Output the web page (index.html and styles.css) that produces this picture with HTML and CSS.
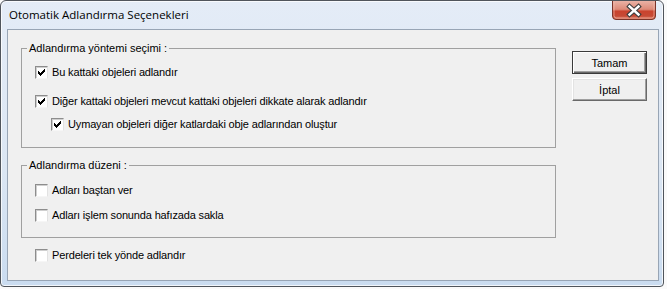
FILE: index.html
```html
<!DOCTYPE html>
<html lang="tr">
<head>
<meta charset="utf-8">
<title>Otomatik Adlandırma Seçenekleri</title>
<link rel="stylesheet" href="styles.css">
</head>
<body>
<div class="window">
  <div class="titlebar">
    <span class="title">Otomatik Adlandırma Seçenekleri</span>
    <span class="close">
      <svg width="44" height="19" viewBox="0 0 44 19">
        <defs>
          <linearGradient id="cg" x1="0" y1="0" x2="0" y2="1">
            <stop offset="0" stop-color="#eab2a5"/>
            <stop offset="0.45" stop-color="#dd8a78"/>
            <stop offset="0.55" stop-color="#c9432e"/>
            <stop offset="0.8" stop-color="#c64a35"/>
            <stop offset="1" stop-color="#dc7a63"/>
          </linearGradient>
        </defs>
        <path d="M0.5 0 V15 Q0.5 18.5 4 18.5 H40 Q43.5 18.5 43.5 15 V0" fill="url(#cg)" stroke="#7a3429" stroke-width="1"/>
        <path d="M2 1 V14.5 Q2 17 4.5 17 H39.5 Q42 17 42 14.5 V1" fill="none" stroke="#f3c3b6" stroke-opacity="0.6" stroke-width="1"/>
        <g stroke-linecap="square">
          <path d="M17.5 5.5 L26.5 13.5 M26.5 5.5 L17.5 13.5" stroke="#3d3d3d" stroke-width="4.6"/>
          <path d="M17.5 5.5 L26.5 13.5 M26.5 5.5 L17.5 13.5" stroke="#ffffff" stroke-width="2.4"/>
        </g>
      </svg>
    </span>
  </div>
  <div class="client">
    <div class="options">
      <fieldset class="group g1">
        <legend>Adlandırma yöntemi seçimi :</legend>
        <div class="row r1">
          <span class="cb"><svg class="tick" width="13" height="13" viewBox="0 0 13 13"><path d="M3 5h1v3h-1z M4 6h1v3h-1z M5 7h1v3h-1z M6 6h1v3h-1z M7 5h1v3h-1z M8 4h1v3h-1z M9 3h1v3h-1z" fill="#000"/></svg></span>
          <span class="label">Bu kattaki objeleri adlandır</span>
        </div>
        <div class="row r2">
          <span class="cb"><svg class="tick" width="13" height="13" viewBox="0 0 13 13"><path d="M3 5h1v3h-1z M4 6h1v3h-1z M5 7h1v3h-1z M6 6h1v3h-1z M7 5h1v3h-1z M8 4h1v3h-1z M9 3h1v3h-1z" fill="#000"/></svg></span>
          <span class="label">Diğer kattaki objeleri mevcut kattaki objeleri dikkate alarak adlandır</span>
        </div>
        <div class="row r3 indent">
          <span class="cb"><svg class="tick" width="13" height="13" viewBox="0 0 13 13"><path d="M3 5h1v3h-1z M4 6h1v3h-1z M5 7h1v3h-1z M6 6h1v3h-1z M7 5h1v3h-1z M8 4h1v3h-1z M9 3h1v3h-1z" fill="#000"/></svg></span>
          <span class="label">Uymayan objeleri diğer katlardaki obje adlarından oluştur</span>
        </div>
      </fieldset>
      <fieldset class="group g2">
        <legend>Adlandırma düzeni :</legend>
        <div class="row r4">
          <span class="cb"></span>
          <span class="label">Adları baştan ver</span>
        </div>
        <div class="row r5">
          <span class="cb"></span>
          <span class="label">Adları işlem sonunda hafızada sakla</span>
        </div>
      </fieldset>
      <div class="row r6">
        <span class="cb"></span>
        <span class="label">Perdeleri tek yönde adlandır</span>
      </div>
    </div>
    <div class="buttons">
      <button class="btn default" type="button">Tamam</button>
      <button class="btn" type="button">İptal</button>
    </div>
  </div>
</div>
</body>
</html>
```

FILE: styles.css
```css
html, body {
  margin: 0;
  padding: 0;
}

body {
  width: 667px;
  height: 289px;
  overflow: hidden;
  background: #fafafa;
  font-family: "Liberation Sans", Arial, sans-serif;
  font-size: 11px;
  color: #000;
}

.window {
  box-sizing: border-box;
  width: 664px;
  height: 287px;
  border: 1px solid #50555c;
  border-radius: 6px 6px 4px 4px;
  background: linear-gradient(#e4ecf7, #dbe6f3 60%, #cadcf0);
  box-shadow: inset 0 0 0 1px rgba(255, 255, 255, 0.75);
  padding: 0 4px 5px 6px;
  display: flex;
  flex-direction: column;
}

.titlebar {
  height: 28px;
  display: flex;
  align-items: flex-start;
  flex: none;
}

.title {
  font-family: "Open Sans", "Noto Sans", sans-serif;
  font-size: 11.5px;
  line-height: 16px;
  padding-top: 6px;
  margin-left: 2px;
  color: #000;
}

.close {
  margin-left: auto;
  margin-right: 3px;
  height: 19px;
  display: block;
}

.close svg {
  display: block;
}

.client {
  flex: 1;
  border: 1px solid #98a5b5;
  background: #f0f0f0;
  display: flex;
  align-items: flex-start;
  padding-left: 13px;
}

.options {
  width: 535px;
  display: flex;
  flex-direction: column;
}

.group {
  margin: 0;
  padding: 0;
  min-width: 0;
  border: 1px solid #a0a0a0;
}

.group legend {
  margin-left: 5px;
  padding: 0 2px;
  line-height: 13px;
  height: 13px;
}

.g1 {
  margin-top: 12px;
  padding-bottom: 16px;
}

.g2 {
  margin-top: 11px;
  padding-bottom: 15px;
}

.row {
  display: flex;
  align-items: center;
  gap: 4px;
  height: 13px;
  padding-left: 13px;
}

.row.indent {
  padding-left: 29px;
}

.r1 { margin-top: 11px; }
.r2 { margin-top: 16px; }
.r3 { margin-top: 10px; }
.r4 { margin-top: 12px; }
.r5 { margin-top: 12px; }
.r6 { margin-top: 11px; padding-left: 14px; }

.label {
  line-height: 13px;
  letter-spacing: -0.15px;
  white-space: nowrap;
}

.cb {
  box-sizing: border-box;
  width: 13px;
  height: 13px;
  flex: none;
  position: relative;
  background: #fff;
  border: 1px solid;
  border-color: #8d8d8d #e2e2e2 #f6f6f6 #8d8d8d;
  box-shadow: inset 1px 1px 0 #cfcfcf;
}

.cb .tick {
  position: absolute;
  left: -1px;
  top: -1px;
  display: block;
}

.buttons {
  margin-left: 16px;
  margin-top: 21px;
  display: flex;
  flex-direction: column;
  gap: 4px;
}

.btn {
  box-sizing: border-box;
  width: 75px;
  height: 23px;
  margin: 0;
  padding: 0;
  font-family: "Liberation Sans", Arial, sans-serif;
  font-size: 11px;
  color: #000;
  background: #f0f0f0;
  border: 1px solid;
  border-color: #ffffff #696969 #696969 #ffffff;
  box-shadow: inset -1px -1px 0 #a0a0a0, inset 1px 1px 0 #e3e3e3;
  border-radius: 0;
}

.btn.default {
  border: 1px solid #3a3a3a;
  box-shadow: inset 1px 1px 0 #ffffff, inset -1px -1px 0 #696969, inset -2px -2px 0 #a0a0a0;
}
```
